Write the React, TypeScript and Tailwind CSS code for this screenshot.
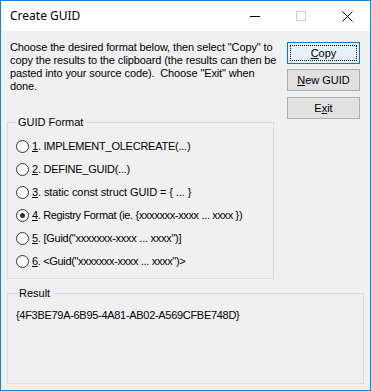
import React from "react";

const formats = [
  { key: "1", label: ". IMPLEMENT_OLECREATE(...)", track: "tracking-[-0.24px]" },
  { key: "2", label: ". DEFINE_GUID(...)", track: "tracking-[-0.25px]" },
  { key: "3", label: ". static const struct GUID = { ... }", track: "tracking-[-0.1px]" },
  { key: "4", label: ". Registry Format (ie. {xxxxxxx-xxxx ... xxxx })", track: "tracking-[-0.35px]" },
  { key: "5", label: '. [Guid("xxxxxxx-xxxx ... xxxx")]', track: "tracking-[-0.26px]" },
  { key: "6", label: '. <Guid("xxxxxxx-xxxx ... xxxx")>', track: "tracking-[-0.34px]" },
];

function Radio({ checked }: { checked?: boolean }) {
  return (
    <span className="w-[13px] h-[13px] rounded-full border border-[#333333] bg-white flex items-center justify-center shrink-0">
      {checked && <span className="w-[5px] h-[5px] rounded-full bg-[#333333]" />}
    </span>
  );
}

export default function App() {
  return (
    <div
      className="w-[371px] h-[391px] border border-[#1883d7] bg-[#f0f0f0] flex flex-col text-black"
      style={{ fontFamily: '"Liberation Sans", Arial, sans-serif' }}
    >
      {/* title bar */}
      <div className="h-[30px] bg-white flex items-center shrink-0">
        <span
          className="pl-[9px] text-[12px] leading-none"
          style={{ fontFamily: '"Noto Sans", "Open Sans", sans-serif' }}
        >
          Create GUID
        </span>
        <div className="ml-auto flex h-full">
          <div className="w-[46px] h-full flex items-center justify-center">
            <span className="w-[10px] h-px bg-black" />
          </div>
          <div className="w-[46px] h-full flex items-center justify-center">
            <span className="w-[10px] h-[10px] border border-[#cccccc]" />
          </div>
          <div className="w-[46px] h-full flex items-center justify-center">
            <svg width="11" height="11" viewBox="0 0 11 11">
              <path d="M0.5 0.5 L10.5 10.5 M10.5 0.5 L0.5 10.5" stroke="#000" strokeWidth="1" />
            </svg>
          </div>
        </div>
      </div>

      {/* body */}
      <div className="flex-1 flex flex-col px-[6px] pb-[6px]">
        <div className="flex">
          <div className="w-[267px] flex flex-col">
            <p className="pt-[10px] pl-[3px] text-[11px] leading-[13px] whitespace-nowrap tracking-[-0.12px]">
              Choose the desired format below, then select "Copy" to
              <br />
              copy the results to the clipboard (the results can then be
              <br />
              pasted into your source code).&nbsp; Choose "Exit" when
              <br />
              done.
            </p>
            <fieldset className="mt-[23px] border border-[#dcdcdc] pl-[8px] pt-[6px] pb-[5px]">
              <legend className="px-[2px] text-[11px] leading-[13px]">GUID Format</legend>
              <div className="flex flex-col">
                {formats.map((f) => (
                  <div key={f.key} className="h-[23px] flex items-center gap-[3px] text-[11px] whitespace-nowrap">
                    <Radio checked={f.key === "4"} />
                    <span className={f.track}>
                      <span className="underline">{f.key}</span>
                      {f.label}
                    </span>
                  </div>
                ))}
              </div>
            </fieldset>
          </div>

          <div className="ml-auto mr-[4px] pt-[11px] flex flex-col text-[11px]">
            <button className="w-[73px] h-[22px] border border-[#0078d7] bg-[#e5f1fb] p-[2px]">
              <span className="w-full h-full border border-dotted border-black flex items-center justify-center">
                <span>
                  <span className="underline">C</span>opy
                </span>
              </span>
            </button>
            <button className="mt-[5px] w-[73px] h-[22px] border border-[#adadad] bg-[#e1e1e1] flex items-center justify-center">
              <span>
                <span className="underline">N</span>ew GUID
              </span>
            </button>
            <button className="mt-[6px] w-[73px] h-[22px] border border-[#adadad] bg-[#e1e1e1] flex items-center justify-center">
              <span>
                E<span className="underline">x</span>it
              </span>
            </button>
          </div>
        </div>

        <fieldset className="mt-[8px] flex-1 border border-[#dcdcdc] pl-[8px] pt-[9px]">
          <legend className="ml-[1px] px-[2px] text-[11px] leading-[13px]">Result</legend>
          <div className="text-[11px] leading-[13px] tracking-[-0.3px]">{"{4F3BE79A-6B95-4A81-AB02-A569CFBE748D}"}</div>
        </fieldset>
      </div>
    </div>
  );
}
